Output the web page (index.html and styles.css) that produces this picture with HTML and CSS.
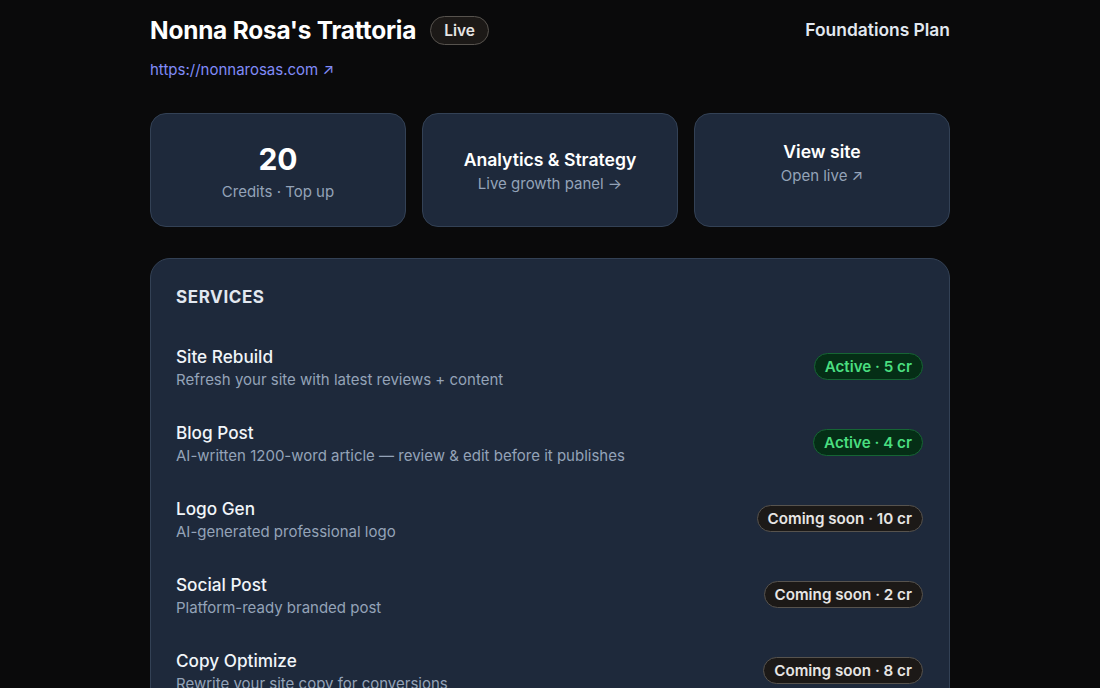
FILE: index.html
```html
<!DOCTYPE html>
<html lang="en">
<head>
    <meta charset="UTF-8">
    <meta name="viewport" content="width=device-width, initial-scale=1.0">
    <title>Nonna Rosa's Trattoria</title>
    <link rel="stylesheet" href="styles.css">
</head>
<body>
    <div class="page">
        <div class="header">
            <div>
                <div class="title-row">
                    <h1>Nonna Rosa's Trattoria</h1>
                    <span class="pill pill-muted pill-live">Live</span>
                </div>
                <a class="site-link" href="#">https://nonnarosas.com ↗</a>
            </div>
            <div class="plan">Foundations Plan</div>
        </div>

        <div class="cards">
            <div class="card card-center">
                <div class="card-number">20</div>
                <div class="card-sub">Credits · Top up</div>
            </div>
            <div class="card card-center">
                <div class="card-title">Analytics &amp; Strategy</div>
                <div class="card-sub">Live growth panel →</div>
            </div>
            <a class="card card-top" href="#">
                <div class="card-title">View site</div>
                <div class="card-sub">Open live ↗</div>
            </a>
        </div>

        <div class="panel">
            <h2>SERVICES</h2>
            <div class="services" id="services"></div>
        </div>
    </div>

    <script>
        const services = [
            { name: "Site Rebuild", desc: "Refresh your site with latest reviews + content", status: "Active", cost: 5 },
            { name: "Blog Post", desc: "AI-written 1200-word article — review & edit before it publishes", status: "Active", cost: 4 },
            { name: "Logo Gen", desc: "AI-generated professional logo", status: "Coming soon", cost: 10 },
            { name: "Social Post", desc: "Platform-ready branded post", status: "Coming soon", cost: 2 },
            { name: "Copy Optimize", desc: "Rewrite your site copy for conversions", status: "Coming soon", cost: 8 }
        ];

        const list = document.getElementById("services");

        services.forEach(s => {
            const row = document.createElement("div");
            row.classList.add("service");

            const info = document.createElement("div");
            const name = document.createElement("div");
            name.classList.add("service-name");
            name.textContent = s.name;
            const desc = document.createElement("div");
            desc.classList.add("service-desc");
            desc.textContent = s.desc;
            info.appendChild(name);
            info.appendChild(desc);

            const badge = document.createElement("span");
            badge.classList.add("pill", s.status === "Active" ? "pill-active" : "pill-muted");
            badge.textContent = `${s.status} · ${s.cost} cr`;

            row.appendChild(info);
            row.appendChild(badge);
            list.appendChild(row);
        });
    </script>
</body>
</html>
```

FILE: styles.css
```css
body {
    margin: 0;
    background-color: #0a0a0b;
    font-family: Inter, "Noto Sans", sans-serif;
    color: #f8fafc;
}

.page {
    width: 800px;
    margin: 0 auto;
    padding-top: 14px;
}

.header {
    display: flex;
    justify-content: space-between;
    align-items: flex-start;
}

.title-row {
    display: flex;
    align-items: center;
    gap: 14px;
}

h1 {
    margin: 0;
    font-size: 24.4px;
    line-height: 32px;
    font-weight: 700;
    color: #fff;
    letter-spacing: -0.2px;
}

.plan {
    font-size: 17.4px;
    line-height: 32px;
    font-weight: 600;
    color: #e2e8f0;
}

.site-link {
    display: inline-block;
    margin-top: 14px;
    font-size: 15px;
    line-height: 20px;
    color: #818cf8;
    text-decoration: none;
}

.pill {
    display: inline-block;
    padding: 2px 10px;
    border-radius: 999px;
    font-size: 15.2px;
    line-height: 21px;
    font-weight: 600;
    white-space: nowrap;
}

.pill-live {
    padding: 3px 13px;
    font-size: 15.5px;
}

.pill-muted {
    background-color: #1c1917;
    border: 1px solid #57534e;
    color: #e7e5e4;
}

.pill-active {
    background-color: #052e16;
    border: 1px solid #166534;
    color: #4ade80;
}

.cards {
    display: grid;
    grid-template-columns: repeat(3, 1fr);
    gap: 16px;
    margin-top: 33px;
}

.card {
    height: 114px;
    box-sizing: border-box;
    background-color: #1e293b;
    border: 1px solid #334155;
    border-radius: 16px;
    display: flex;
    flex-direction: column;
    align-items: center;
    text-decoration: none;
    text-align: center;
}

.card-center {
    justify-content: center;
    padding-top: 2px;
}

.card-top {
    padding-top: 26px;
}

.card-number {
    font-size: 30px;
    line-height: 36px;
    font-weight: 700;
    color: #fff;
    margin-top: 2px;
}

.card-number + .card-sub {
    margin-top: 4px;
}

.card-title {
    font-size: 17.6px;
    line-height: 24px;
    font-weight: 600;
    color: #fff;
}

.card-sub {
    font-size: 15px;
    line-height: 22px;
    color: #94a3b8;
    margin-top: 1px;
}

.panel {
    margin-top: 31px;
    background-color: #1e293b;
    border: 1px solid #334155;
    border-radius: 20px;
    padding: 25px 26px 30px 25px;
}

h2 {
    margin: 0;
    font-size: 17px;
    line-height: 26px;
    font-weight: 700;
    letter-spacing: 0.6px;
    color: #e2e8f0;
}

.services {
    display: flex;
    flex-direction: column;
    gap: 30px;
    margin-top: 35px;
}

.service {
    display: flex;
    justify-content: space-between;
    align-items: center;
}

.service .pill {
    margin-bottom: 4px;
}

.service-name {
    font-size: 17.2px;
    line-height: 24px;
    font-weight: 500;
    color: #f1f5f9;
}

.service-desc {
    font-size: 15px;
    line-height: 22px;
    color: #94a3b8;
}
```
